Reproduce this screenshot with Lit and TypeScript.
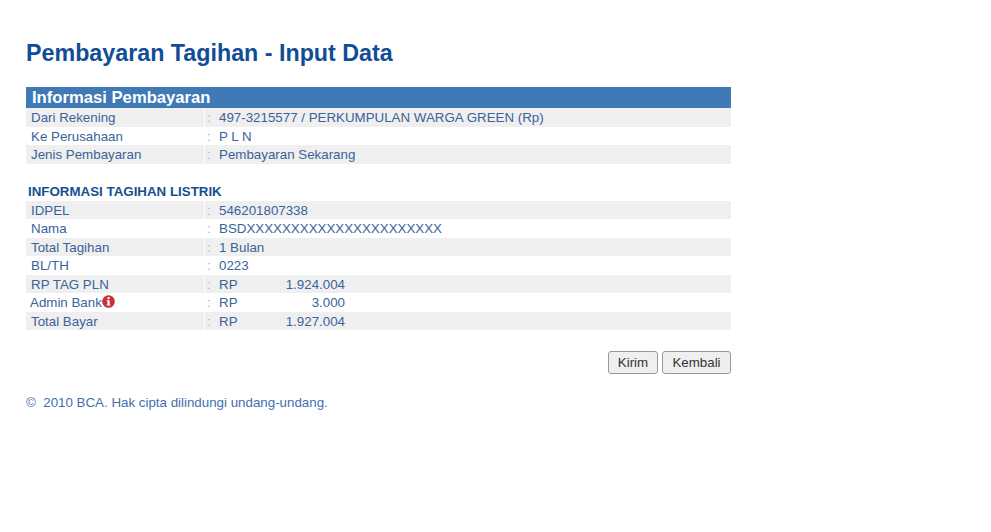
import { LitElement, html, css, svg } from "lit";
import { customElement } from "lit/decorators.js";

type Row = { label: string; value?: string; amount?: string; info?: boolean };

const payment: Row[] = [
  { label: "Dari Rekening", value: "497-3215577 / PERKUMPULAN WARGA GREEN (Rp)" },
  { label: "Ke Perusahaan", value: "P L N" },
  { label: "Jenis Pembayaran", value: "Pembayaran Sekarang" },
];
const bill: Row[] = [
  { label: "IDPEL", value: "546201807338" },
  { label: "Nama", value: "BSDXXXXXXXXXXXXXXXXXXXXXX" },
  { label: "Total Tagihan", value: "1 Bulan" },
  { label: "BL/TH", value: "0223" },
  { label: "RP TAG PLN", amount: "1.924.004" },
  { label: "Admin Bank", amount: "3.000", info: true },
  { label: "Total Bayar", amount: "1.927.004" },
];

const infoIcon = svg`<svg class="info" viewBox="0 0 14 14" width="13" height="13" aria-hidden="true">
  <circle cx="7" cy="7" r="6.8" fill="#c5303a"/>
  <rect x="5.9" y="2.3" width="2.3" height="2.2" fill="#fff"/>
  <path d="M5 5.6H8.2V10.2H9.1V11.4H5V10.2H5.9V6.8H5Z" fill="#fff"/>
</svg>`;

@customElement("app-root")
export class AppRoot extends LitElement {
  static styles = css`
    :host {
      display: block;
      width: 991px;
      height: 532px;
      background: #fff;
      font-family: "Liberation Sans", Arial, sans-serif;
      color: #3a6399;
      overflow: hidden;
    }
    .page {
      width: 705px;
      padding: 40px 0 0 26px;
    }
    h1 {
      margin: 0 0 20px;
      font-size: 23.27px;
      line-height: 27px;
      font-weight: 700;
      color: #114d97;
    }
    .band {
      height: 21px;
      line-height: 21px;
      padding-left: 6px;
      background: #3f79b6;
      color: #fff;
      font-size: 16.65px;
      font-weight: 700;
    }
    .row {
      display: grid;
      grid-template-columns: 179px 14px 1fr;
      box-sizing: border-box;
      height: 18.5px;
      padding-top: 1px;
      line-height: 17.5px;
      font-size: 13.33px;
    }
    .row.odd {
      background: #efefef;
    }
    .label {
      display: flex;
      align-items: center;
      margin-top: -1px;
      padding: 1px 0 0 5px;
      border-right: 1px solid transparent;
    }
    .label.has-info {
      padding-left: 4px;
    }
    .row.odd .label {
      border-right-color: #fff;
    }
    .colon {
      padding-left: 2px;
      color: #a8b4c4;
    }
    .money {
      display: grid;
      grid-template-columns: 40px 86px;
    }
    .money span:last-child {
      text-align: right;
    }
    .info {
      flex: none;
      margin-top: -2px;
    }
    h2 {
      margin: 19px 0 0 2px;
      font-size: 13.33px;
      line-height: 18px;
      font-weight: 700;
      color: #17508f;
    }
    .actions {
      display: flex;
      justify-content: flex-end;
      gap: 4px;
      margin-top: 21px;
    }
    button {
      height: 23px;
      padding: 0;
      border: 1px solid #999;
      border-radius: 3px;
      background: #efefef;
      color: #333;
      font: 13.33px "Liberation Sans", Arial, sans-serif;
    }
    .send { width: 50px; }
    .back { width: 69px; }
    footer {
      margin-top: 21px;
      font-size: 13.33px;
      line-height: 16px;
      color: #3f6fb0;
      white-space: pre;
    }
  `;

  private row(r: Row, i: number) {
    return html`<div class="row ${i % 2 === 0 ? "odd" : ""}">
      <div class="label ${r.info ? "has-info" : ""}">${r.label}${r.info ? infoIcon : ""}</div>
      <div class="colon">:</div>
      ${r.amount
        ? html`<div class="money"><span>RP</span><span>${r.amount}</span></div>`
        : html`<div>${r.value}</div>`}
    </div>`;
  }

  render() {
    return html`<div class="page">
      <h1>Pembayaran Tagihan - Input Data</h1>
      <div class="band">Informasi Pembayaran</div>
      ${payment.map((r, i) => this.row(r, i))}
      <h2>INFORMASI TAGIHAN LISTRIK</h2>
      ${bill.map((r, i) => this.row(r, i))}
      <div class="actions">
        <button class="send">Kirim</button>
        <button class="back">Kembali</button>
      </div>
      <footer>©  2010 BCA. Hak cipta dilindungi undang-undang.</footer>
    </div>`;
  }
}
